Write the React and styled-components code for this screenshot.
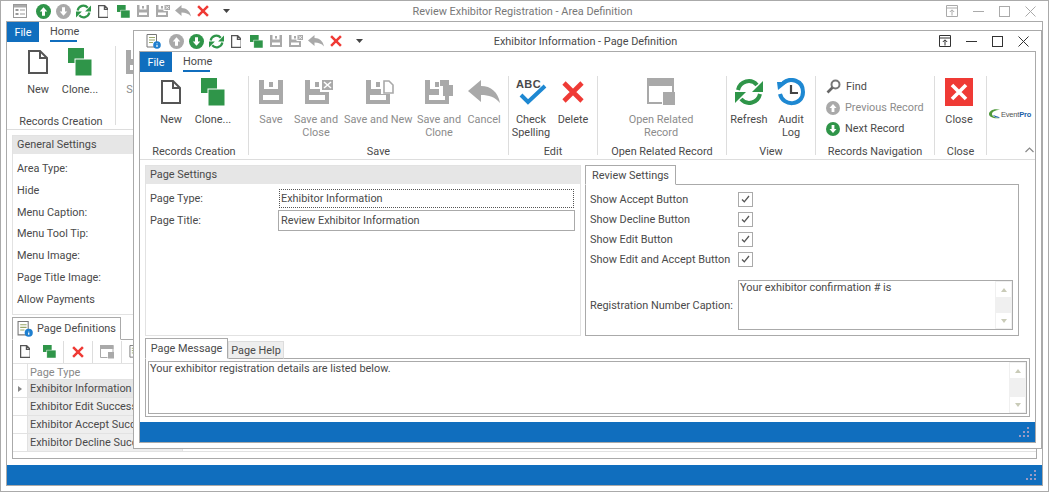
import React from "react";
import styled, { createGlobalStyle } from "styled-components";

const Global = createGlobalStyle`
    html, body { margin: 0; padding: 0; background: #fff; }
    body {
        font-family: Roboto, "Liberation Sans", sans-serif;
        font-size: 10.9px;
        color: #4a4a4a;
    }
`;

const BLUE = "#106ebe";
const GREEN = "#2f9549";
const RED = "#ef3a35";
const GREY = "#a9a9a9";
const DARK = "#555";

/* ---------- icons ---------- */
const DocIcon = ({ h = 24 }) => (
    <svg width={(h * 20) / 24} height={h} viewBox="0 0 20 24">
        <path d="M1 1H12L19 8V23H1Z M12 1V8H19" fill="#fff" stroke={DARK} strokeWidth={h > 18 ? 2 : 2.6} />
    </svg>
);
const CloneIcon = ({ w = 24, h = 28 }) => (
    <svg width={w} height={h} viewBox="0 0 24 28" preserveAspectRatio="none">
        <rect x="0" y="0" width="16" height="15" fill={GREEN} />
        <rect x="7" y="11" width="17" height="17" fill={GREEN} stroke="#fff" strokeWidth="1" />
    </svg>
);
const SaveIcon = ({ kind, h = 24 }) => (
    <svg width={((kind ? 28 : 24) * h) / 24} height={h} viewBox={kind ? "0 0 28 24" : "0 0 24 24"}>
        <path
            fillRule="evenodd"
            fill={GREY}
            d="M0 0H24V24H0Z M5 0V9H19V0Z M4 15V20H20V15Z"
        />
        <rect x="10" y="2" width="4" height="5" fill={GREY} />
        {kind === "close" && (
            <g>
                <rect x="15" y="0" width="13" height="12" fill="#fff" />
                <rect x="17" y="0" width="11" height="10" fill={GREY} />
                <path d="M19 2L26 8M26 2L19 8" stroke="#fff" strokeWidth="1.6" />
            </g>
        )}
        {kind === "new" && (
            <g>
                <rect x="15" y="0" width="13" height="14" fill="#fff" />
                <path d="M18 1H23L27 5V13H18Z" fill="#fff" stroke={GREY} strokeWidth="1.6" />
            </g>
        )}
        {kind === "clone" && (
            <g>
                <rect x="14" y="5" width="14" height="11" fill="#fff" />
                <rect x="15" y="0" width="7" height="6" fill={GREY} />
                <rect x="18" y="5" width="10" height="11" fill={GREY} />
            </g>
        )}
    </svg>
);
const CancelIcon = ({ w = 32 }) => (
    <svg width={w} height={(w * 24) / 32} viewBox="0 0 32 24">
        <path d="M0 11L13 0V6C23 6 30 12 32 23C27 17 21 15 13 15V22Z" fill={GREY} />
    </svg>
);
const CrossIcon = ({ s = 22 }) => (
    <svg width={s} height={s} viewBox="0 0 22 22">
        <path d="M2 2L20 20M20 2L2 20" stroke={RED} strokeWidth="4.6" fill="none" />
    </svg>
);
const SpellIcon = () => (
    <svg width="32" height="28" viewBox="0 0 32 28">
        <text x="1" y="10" fontFamily="Liberation Sans" fontWeight="700" fontSize="11" letterSpacing=".4" fill="#4a4a4a">
            ABC
        </text>
        <path d="M6 17L13 24L30 8" stroke="#1e88d2" strokeWidth="4" fill="none" />
    </svg>
);
const RelatedIcon = ({ s = 28 }) => (
    <svg width={s} height={s} viewBox="0 0 28 28">
        <path d="M1 1H26V20" fill="none" stroke={GREY} strokeWidth="2" />
        <rect x="0" y="0" width="27" height="8" fill={GREY} />
        <path d="M1 8V25H15" fill="none" stroke={GREY} strokeWidth="2" />
        <rect x="16" y="14" width="12" height="13" fill={GREY} />
    </svg>
);
const RefreshIcon = ({ s = 28 }) => (
    <svg width={s} height={s} viewBox="0 0 28 28">
        <path d="M3 12C5 3 16 0 22 7" fill="none" stroke={GREEN} strokeWidth="4" />
        <path d="M28 3V14H17Z" fill={GREEN} />
        <path d="M25 16C23 25 12 28 6 21" fill="none" stroke={GREEN} strokeWidth="4" />
        <path d="M0 25V14H11Z" fill={GREEN} />
    </svg>
);
const AuditIcon = () => (
    <svg width="28" height="28" viewBox="0 0 28 28">
        <path d="M6 5C13 -1 26 2 26 14C26 28 6 29 3 16" fill="none" stroke="#1e88d2" strokeWidth="4" />
        <path d="M0 4H11L1 12Z" fill="#1e88d2" />
        <path d="M14 7V15H21" fill="none" stroke="#444" strokeWidth="2.2" />
    </svg>
);
const FindIcon = () => (
    <svg width="15" height="15" viewBox="0 0 15 15">
        <circle cx="9.5" cy="5.5" r="4" fill="#fff" stroke="#777" strokeWidth="2" />
        <path d="M6.5 8.5L1.5 13.5" stroke="#666" strokeWidth="2.6" />
    </svg>
);
const ArrowDot = ({ up, color, s = 14 }) => (
    <svg width={s} height={s} viewBox="0 0 14 14">
        <circle cx="7" cy="7" r="7" fill={color} />
        <path
            d={up ? "M7 3L10.5 7H8.4V11H5.6V7H3.5Z" : "M7 11L10.5 7H8.4V3H5.6V7H3.5Z"}
            fill="#fff"
        />
    </svg>
);
const CloseBoxIcon = () => (
    <svg width="28" height="28" viewBox="0 0 28 28">
        <rect width="28" height="28" fill={RED} />
        <path d="M7 7L21 21M21 7L7 21" stroke="#fff" strokeWidth="3.6" />
    </svg>
);
const ListIcon = () => (
    <svg width="14" height="14" viewBox="0 0 14 14">
        <rect x=".5" y=".5" width="13" height="13" fill="#fff" stroke="#999" />
        <rect x="1" y="1" width="12" height="2.5" fill="#aaa" />
        <rect x="2.5" y="5" width="3" height="2" fill="#999" />
        <rect x="2.5" y="9" width="3" height="2" fill="#999" />
        <path d="M7 6H12M7 10H12" stroke="#999" />
    </svg>
);
const InfoDocIcon = ({ s = 15 }) => (
    <svg width={s} height={s} viewBox="0 0 15 15">
        <path d="M1 .5H10.5V13H1Z" fill="#fff" stroke="#777" />
        <path d="M3 3.5H9M3 6H9M3 8.5H7" stroke="#9aa86a" />
        <circle cx="11" cy="11" r="3.8" fill="#1e7fcf" />
        <path d="M11 9.6V9.9M11 10.8V13" stroke="#fff" strokeWidth="1.2" />
    </svg>
);
const CaretDown = () => (
    <svg width="7" height="4" viewBox="0 0 7 4">
        <path d="M0 0H7L3.5 4Z" fill="#444" />
    </svg>
);
const ChevronUp = () => (
    <svg width="9" height="6" viewBox="0 0 9 6">
        <path d="M.5 5L4.5 1L8.5 5" fill="none" stroke="#888" strokeWidth="1.2" />
    </svg>
);
const Restore = ({ c }) => (
    <svg width="12" height="12" viewBox="0 0 12 12">
        <path d="M.5 .5H11.5V11.5H.5ZM.5 3H11.5M6 10.5V5M3.8 7L6 4.8L8.2 7" fill="none" stroke={c} />
    </svg>
);
const Minimize = ({ c }) => (
    <svg width="11" height="11" viewBox="0 0 11 11">
        <path d="M0 5.5H11" stroke={c} />
    </svg>
);
const Maximize = ({ c }) => (
    <svg width="11" height="11" viewBox="0 0 11 11">
        <rect x=".5" y=".5" width="10" height="10" fill="none" stroke={c} />
    </svg>
);
const CloseX = ({ c }) => (
    <svg width="11" height="11" viewBox="0 0 11 11">
        <path d="M.5 .5L10.5 10.5M10.5 .5L.5 10.5" fill="none" stroke={c} />
    </svg>
);
const Grip = () => (
    <svg width="11" height="11" viewBox="0 0 11 11">
        {[[8, 0], [4, 4], [8, 4], [0, 8], [4, 8], [8, 8]].map(([x, y]) => (
            <rect key={x + "-" + y} x={x} y={y} width="2" height="2" fill="#9b9bc4" />
        ))}
    </svg>
);

/* ---------- window chrome ---------- */
const Win = styled.div`
    box-sizing: border-box;
    background: #fff;
    border: 1px solid #aaa;
    display: flex;
    flex-direction: column;
    padding: 0 5px 5px;
`;
const OuterWin = styled(Win)`
    position: relative;
    width: 1049px;
    height: 492px;
    overflow: hidden;
`;
const ChildWin = styled(Win)`
    position: absolute;
    left: 132px;
    top: 29px;
    width: 909px;
    height: 419px;
`;
const TitleBar = styled.div`
    height: 20px;
    flex: none;
    display: grid;
    grid-template-columns: 1fr auto 1fr;
    align-items: center;
    margin: 0 -5px;
`;
const Qat = styled.div`
    display: flex;
    align-items: center;
    padding-left: 9px;
`;
const QatCell = styled.span`
    width: 20px;
    height: 20px;
    display: flex;
    align-items: center;
    justify-content: center;
    margin-right: ${(p) => p.$mr || 0}px;
`;
const Title = styled.div`
    color: ${(p) => (p.$dim ? "#777" : "#4a4a4a")};
    white-space: nowrap;
    margin-right: 4px;
`;
const Controls = styled.div`
    justify-self: end;
    display: flex;
    align-items: center;
    padding-right: 5px;
`;
const Ctl = styled.span`
    width: 26px;
    display: flex;
    justify-content: center;
`;
const Frame = styled.div`
    flex: 1;
    min-height: 0;
    border: 1px solid #aaa;
    display: flex;
    flex-direction: column;
`;
const StatusBar = styled.div`
    height: 20px;
    flex: none;
    background: ${BLUE};
    display: flex;
    justify-content: flex-end;
    align-items: flex-end;
    padding: 0 5px 4px 0;
    box-sizing: border-box;
`;

/* ---------- ribbon ---------- */
const Ribbon = styled.div`
    flex: none;
    height: 108px;
    box-sizing: border-box;
    border-bottom: 1px solid #ddd;
`;
const RibbonTabs = styled.div`
    height: 20px;
    display: flex;
    align-items: stretch;
`;
const FileTab = styled.div`
    width: 32px;
    background: ${BLUE};
    color: #fff;
    display: flex;
    align-items: center;
    justify-content: center;
`;
const HomeTab = styled.div`
    margin-left: 11px;
    width: 27px;
    box-sizing: border-box;
    border-bottom: 2px solid ${BLUE};
    line-height: 19px;
    text-align: center;
    white-space: nowrap;
`;
const Groups = styled.div`
    display: flex;
    height: 79px;
    margin-top: 4px;
`;
const Group = styled.div`
    flex: none;
    width: ${(p) => p.$w}px;
    box-sizing: border-box;
    border-right: ${(p) => (p.$last ? "none" : "1px solid #ddd")};
    display: flex;
    flex-direction: column;
    position: relative;
`;
const GroupBody = styled.div`
    flex: 1;
    min-height: 0;
    display: flex;
    padding: 2px 0 0 ${(p) => p.$pad || 0}px;
`;
const GroupLabel = styled.div`
    height: 14px;
    line-height: 14px;
    margin-bottom: -4px;
    text-align: center;
    white-space: nowrap;
`;
const BigButton = styled.div`
    flex: none;
    width: ${(p) => p.$w}px;
    text-align: center;
    line-height: 13px;
    white-space: nowrap;
    color: ${(p) => (p.$off ? "#8c8c8c" : "#4a4a4a")};
`;
const BigIcon = styled.div`
    height: 28px;
    margin-bottom: 7px;
    padding-left: ${(p) => p.$shift || 0}px;
    display: flex;
    align-items: center;
    justify-content: center;
`;
const SmallStack = styled.div`
    display: flex;
    flex-direction: column;
    margin-top: -2px;
    padding-left: 10px;
`;
const SmallButton = styled.div`
    height: 21px;
    display: flex;
    align-items: center;
    gap: 5px;
    white-space: nowrap;
    color: ${(p) => (p.$off ? "#8c8c8c" : "#4a4a4a")};
`;
const Logo = styled.div`
    margin: 33px 0 0 2px;
    display: flex;
    align-items: center;
    font-family: "Liberation Sans", sans-serif;
    font-size: 7.5px;
    letter-spacing: -0.2px;
    color: #555;
    b { color: #1d5fa8; }
`;
const Collapse = styled.span`
    position: absolute;
    right: 2px;
    bottom: 2px;
    display: flex;
`;

/* ---------- panels ---------- */
const Panel = styled.div`
    border: 1px solid #e2e2e2;
    box-sizing: border-box;
`;
const PanelHead = styled.div`
    height: 18px;
    line-height: 17px;
    background: #e6e6e6;
    padding-left: 4px;
`;
const Field = styled.div`
    flex: none;
    width: 297px;
    height: 21px;
    line-height: 19px;
    box-sizing: border-box;
    border: 1px solid ${(p) => (p.$focus ? "#fff" : "#aaa")};
    padding: 0 2px;
    outline: ${(p) => (p.$focus ? "1px dotted #555" : "none")};
    outline-offset: -2px;
`;
const FormBody = styled.div`
    padding-top: 3px;
`;
const FormRow = styled.div`
    display: flex;
    align-items: center;
    height: 22px;
    padding-left: 4px;
`;
const FormLabel = styled.div`
    width: 128px;
    flex: none;
`;
const Content = styled.div`
    flex: 1;
    min-height: 0;
    padding: 5px 5px 0;
    display: flex;
    flex-direction: column;
`;
const TopRow = styled.div`
    flex: none;
    display: flex;
    gap: 4px;
    height: 171px;
`;
const SettingsPanel = styled(Panel)`
    width: 436px;
`;
const SettingsBody = styled.div`
    padding-top: 4px;
`;
const TabbedColumn = styled.div`
    display: flex;
    flex-direction: column;
    width: ${(p) => p.$w}px;
`;
const TabStrip = styled.div`
    flex: none;
    display: flex;
    align-items: flex-end;
    height: ${(p) => p.$h}px;
    margin-bottom: -1px;
    position: relative;
`;
const Tab = styled.div`
    box-sizing: border-box;
    width: ${(p) => p.$w}px;
    height: ${(p) => (p.$active ? "100%" : "calc(100% - 3px)")};
    border: 1px solid ${(p) => (p.$active ? "#aaa" : "#ddd")};
    border-bottom: ${(p) => (p.$active ? "1px solid #fff" : "1px solid #aaa")};
    background: ${(p) => (p.$active ? "#fff" : "#eee")};
    display: flex;
    align-items: center;
    justify-content: center;
    gap: 4px;
    white-space: nowrap;
`;
const TabBox = styled.div`
    flex: 1;
    min-height: 0;
    border: 1px solid #aaa;
    box-sizing: border-box;
`;
const CheckRow = styled.div`
    height: 20px;
    display: flex;
    align-items: center;
    padding-left: 4px;
`;
const CheckLabel = styled.div`
    width: 148px;
    flex: none;
    white-space: nowrap;
`;
const CheckBox = styled.span`
    width: 13px;
    height: 13px;
    border: 1px solid #aaa;
    display: flex;
    align-items: center;
    justify-content: center;
`;
const Memo = styled.div`
    border: 1px solid #aaa;
    display: flex;
    box-sizing: border-box;
    height: ${(p) => (p.$fill ? "100%" : `${p.$h}px`)};
    width: ${(p) => (p.$fill ? "auto" : `${p.$w}px`)};
`;
const MemoText = styled.div`
    flex: 1;
    padding: 0 1px;
    line-height: 14px;
`;
const ScrollBar = styled.div`
    width: 17px;
    flex: none;
    background: #f0f0f0;
    display: flex;
    flex-direction: column;
    justify-content: space-between;
    align-items: center;
    padding: 1px 0;
`;
const ScrollBtn = styled.span`
    width: 15px;
    height: 15px;
    background: #fff;
    display: flex;
    align-items: center;
    justify-content: center;
    &::after {
        content: "";
        border-left: 3.5px solid transparent;
        border-right: 3.5px solid transparent;
        ${(p) => (p.$up ? "border-bottom" : "border-top")}: 4px solid #c9cbb8;
    }
`;
const CaptionRow = styled.div`
    display: flex;
    align-items: center;
    padding: 11px 0 0 4px;
`;
const MessageWrap = styled.div`
    flex: none;
    height: 79px;
    margin-top: 2px;
    display: flex;
    flex-direction: column;
    width: 885px;
`;
const MessageBox = styled(TabBox)`
    padding: 2px;
`;

/* ---------- outer window body ---------- */
const OuterBody = styled.div`
    flex: 1;
    min-height: 0;
    padding: 5px 5px 6px;
    display: flex;
    flex-direction: column;
`;
const GeneralPanel = styled(Panel)`
    flex: none;
    height: 180px;
    margin-bottom: 2px;
`;
const GeneralRows = styled.div`
    padding: 4px 0 0 4px;
`;
const GeneralRow = styled.div`
    height: 21.8px;
    line-height: 21.8px;
`;
const DefsWrap = styled.div`
    flex: 1;
    min-height: 0;
    display: flex;
    flex-direction: column;
`;
const Toolbar = styled.div`
    height: 24px;
    box-sizing: border-box;
    display: flex;
    align-items: center;
    gap: 4px;
    padding-left: 2px;
    border-bottom: 1px solid #e2e2e2;
`;
const ToolCell = styled.span`
    width: 20px;
    display: flex;
    align-items: center;
    justify-content: center;
`;
const ToolSep = styled.span`
    width: 1px;
    height: 22px;
    background: #ddd;
`;
const GridRow = styled.div`
    display: flex;
    height: 18px;
    border-bottom: 1px solid #e2e2e2;
    box-sizing: border-box;
`;
const GridHead = styled(GridRow)`
    height: 16px;
    color: #888;
`;
const Indicator = styled.div`
    width: 14px;
    flex: none;
    border-right: 1px solid #e2e2e2;
    display: flex;
    align-items: center;
    justify-content: center;
    &::after {
        content: "";
        display: ${(p) => (p.$on ? "block" : "none")};
        border-top: 3.5px solid transparent;
        border-bottom: 3.5px solid transparent;
        border-left: 4px solid #888;
    }
`;
const GridCell = styled.div`
    width: 155px;
    flex: none;
    box-sizing: border-box;
    padding-left: 2px;
    line-height: 17px;
    white-space: nowrap;
    overflow: hidden;
    border-right: 1px solid #e2e2e2;
    background: ${(p) => p.$bg || "transparent"};
`;

const Check = () => (
    <CheckBox>
        <svg width="9" height="8" viewBox="0 0 9 8">
            <path d="M1 4.5L3.3 6.8L8 1" fill="none" stroke="#555" strokeWidth="1.3" />
        </svg>
    </CheckBox>
);

const Scroll = () => (
    <ScrollBar>
        <ScrollBtn $up />
        <ScrollBtn />
    </ScrollBar>
);

const RibbonHead = () => (
    <RibbonTabs>
        <FileTab>File</FileTab>
        <HomeTab>Home</HomeTab>
    </RibbonTabs>
);

const CreationGroup = () => (
    <Group $w={109}>
        <GroupBody $pad={13}>
            <BigButton $w={36}>
                <BigIcon><DocIcon /></BigIcon>
                New
            </BigButton>
            <BigButton $w={48}>
                <BigIcon><CloneIcon /></BigIcon>
                Clone...
            </BigButton>
        </GroupBody>
        <GroupLabel>Records Creation</GroupLabel>
    </Group>
);

const QuickIcons = ({ up, down, first }) => (
    <Qat>
        <QatCell $mr={3}>
            {first === "list" ? <ListIcon /> : <InfoDocIcon />}
        </QatCell>
        <QatCell><ArrowDot up color={up} s={15} /></QatCell>
        <QatCell><ArrowDot color={down} s={15} /></QatCell>
        <QatCell><RefreshIcon s={15} /></QatCell>
        <QatCell><DocIcon h={13} /></QatCell>
        <QatCell><CloneIcon w={13} h={13} /></QatCell>
        <QatCell><SaveIcon h={12} /></QatCell>
        <QatCell><SaveIcon h={12} kind="close" /></QatCell>
        <QatCell><CancelIcon w={16} /></QatCell>
        <QatCell $mr={3}><CrossIcon s={12} /></QatCell>
        <QatCell><CaretDown /></QatCell>
    </Qat>
);

const WinControls = ({ c }) => (
    <Controls>
        <Ctl><Restore c={c} /></Ctl>
        <Ctl><Minimize c={c} /></Ctl>
        <Ctl><Maximize c={c} /></Ctl>
        <Ctl><CloseX c={c} /></Ctl>
    </Controls>
);

const ChildWindow = () => (
    <ChildWin>
        <TitleBar>
            <QuickIcons up={GREY} down={GREEN} first="info" />
            <Title>Exhibitor Information - Page Definition</Title>
            <WinControls c="#333" />
        </TitleBar>
        <Frame>
            <Ribbon>
                <RibbonHead />
                <Groups>
                    <CreationGroup />
                    <Group $w={260}>
                        <GroupBody $pad={5}>
                            <BigButton $off $w={34}><BigIcon><SaveIcon /></BigIcon>Save</BigButton>
                            <BigButton $off $w={56}><BigIcon $shift={6}><SaveIcon kind="close" /></BigIcon>Save and<br />Close</BigButton>
                            <BigButton $off $w={68}><BigIcon $shift={4}><SaveIcon kind="new" /></BigIcon>Save and New</BigButton>
                            <BigButton $off $w={54}><BigIcon><SaveIcon kind="clone" /></BigIcon>Save and<br />Clone</BigButton>
                            <BigButton $off $w={36}><BigIcon><CancelIcon /></BigIcon>Cancel</BigButton>
                        </GroupBody>
                        <GroupLabel>Save</GroupLabel>
                    </Group>
                    <Group $w={89}>
                        <GroupBody $pad={2}>
                            <BigButton $w={40}><BigIcon><SpellIcon /></BigIcon>Check<br />Spelling</BigButton>
                            <BigButton $w={44}><BigIcon><CrossIcon /></BigIcon>Delete</BigButton>
                        </GroupBody>
                        <GroupLabel>Edit</GroupLabel>
                    </Group>
                    <Group $w={129}>
                        <GroupBody $pad={13}>
                            <BigButton $off $w={100}><BigIcon><RelatedIcon /></BigIcon>Open Related<br />Record</BigButton>
                        </GroupBody>
                        <GroupLabel>Open Related Record</GroupLabel>
                    </Group>
                    <Group $w={89}>
                        <GroupBody $pad={1}>
                            <BigButton $w={42}><BigIcon><RefreshIcon /></BigIcon>Refresh</BigButton>
                            <BigButton $w={42}><BigIcon><AuditIcon /></BigIcon>Audit<br />Log</BigButton>
                        </GroupBody>
                        <GroupLabel>View</GroupLabel>
                    </Group>
                    <Group $w={119}>
                        <GroupBody>
                            <SmallStack>
                                <SmallButton><FindIcon />Find</SmallButton>
                                <SmallButton $off><ArrowDot up color={GREY} />Previous Record</SmallButton>
                                <SmallButton><ArrowDot color={GREEN} />Next Record</SmallButton>
                            </SmallStack>
                        </GroupBody>
                        <GroupLabel>Records Navigation</GroupLabel>
                    </Group>
                    <Group $w={52}>
                        <GroupBody $pad={3}>
                            <BigButton $w={42}><BigIcon><CloseBoxIcon /></BigIcon>Close</BigButton>
                        </GroupBody>
                        <GroupLabel>Close</GroupLabel>
                    </Group>
                    <Group $w={49} $last>
                        <Logo>
                            <svg width="12" height="10" viewBox="0 0 12 10">
                                <path d="M11 1C5 -1 0 2 0 5C0 8 5 10 11 9C6 9 3 7 3 5C3 3 6 1 11 1Z" fill="#4f9a3c" />
                                <path d="M11 9C8 9 5 8 4 6C6 7 9 7 11 9Z" fill="#1d5fa8" />
                            </svg>
                            <span>Event<b>Pro</b></span>
                        </Logo>
                        <Collapse><ChevronUp /></Collapse>
                    </Group>
                </Groups>
            </Ribbon>
            <Content>
                <TopRow>
                    <SettingsPanel>
                        <PanelHead>Page Settings</PanelHead>
                        <FormBody>
                            <FormRow><FormLabel>Page Type:</FormLabel><Field $focus>Exhibitor Information</Field></FormRow>
                            <FormRow><FormLabel>Page Title:</FormLabel><Field>Review Exhibitor Information</Field></FormRow>
                        </FormBody>
                    </SettingsPanel>
                    <TabbedColumn $w={434}>
                        <TabStrip $h={20}>
                            <Tab $active $w={91}>Review Settings</Tab>
                        </TabStrip>
                        <TabBox>
                            <SettingsBody>
                                <CheckRow><CheckLabel>Show Accept Button</CheckLabel><Check /></CheckRow>
                                <CheckRow><CheckLabel>Show Decline Button</CheckLabel><Check /></CheckRow>
                                <CheckRow><CheckLabel>Show Edit Button</CheckLabel><Check /></CheckRow>
                                <CheckRow><CheckLabel>Show Edit and Accept Button</CheckLabel><Check /></CheckRow>
                                <CaptionRow>
                                    <CheckLabel>Registration Number Caption:</CheckLabel>
                                    <Memo $w={275} $h={50}>
                                        <MemoText>Your exhibitor confirmation # is</MemoText>
                                        <Scroll />
                                    </Memo>
                                </CaptionRow>
                            </SettingsBody>
                        </TabBox>
                    </TabbedColumn>
                </TopRow>
                <MessageWrap>
                    <TabStrip $h={21}>
                        <Tab $active $w={83}>Page Message</Tab>
                        <Tab $w={56}>Page Help</Tab>
                    </TabStrip>
                    <MessageBox>
                        <Memo $fill>
                            <MemoText>Your exhibitor registration details are listed below.</MemoText>
                            <Scroll />
                        </Memo>
                    </MessageBox>
                </MessageWrap>
            </Content>
            <StatusBar><Grip /></StatusBar>
        </Frame>
    </ChildWin>
);

const App = () => (
    <>
        <Global />
        <OuterWin>
            <TitleBar>
                <QuickIcons up={GREEN} down={GREY} first="list" />
                <Title $dim>Review Exhibitor Registration - Area Definition</Title>
                <WinControls c="#aaa" />
            </TitleBar>
            <Frame>
                <Ribbon>
                    <RibbonHead />
                    <Groups>
                        <CreationGroup />
                        <Group $w={200}>
                            <GroupBody $pad={5}>
                                <BigButton $off $w={34}><BigIcon><SaveIcon /></BigIcon>Save</BigButton>
                            </GroupBody>
                        </Group>
                    </Groups>
                </Ribbon>
                <OuterBody>
                    <GeneralPanel>
                        <PanelHead>General Settings</PanelHead>
                        <GeneralRows>
                            <GeneralRow>Area Type:</GeneralRow>
                            <GeneralRow>Hide</GeneralRow>
                            <GeneralRow>Menu Caption:</GeneralRow>
                            <GeneralRow>Menu Tool Tip:</GeneralRow>
                            <GeneralRow>Menu Image:</GeneralRow>
                            <GeneralRow>Page Title Image:</GeneralRow>
                            <GeneralRow>Allow Payments</GeneralRow>
                        </GeneralRows>
                    </GeneralPanel>
                    <DefsWrap>
                        <TabStrip $h={23}>
                            <Tab $active $w={109}><InfoDocIcon s={16} />Page Definitions</Tab>
                        </TabStrip>
                        <TabBox>
                            <Toolbar>
                                <ToolCell><DocIcon h={13} /></ToolCell>
                                <ToolCell><CloneIcon w={13} h={13} /></ToolCell>
                                <ToolSep />
                                <ToolCell><CrossIcon s={12} /></ToolCell>
                                <ToolSep />
                                <ToolCell><RelatedIcon s={14} /></ToolCell>
                                <ToolSep />
                                <ToolCell><InfoDocIcon s={14} /></ToolCell>
                            </Toolbar>
                            <GridHead><Indicator /><GridCell>Page Type</GridCell></GridHead>
                            <GridRow><Indicator $on /><GridCell $bg="#e6e6e6">Exhibitor Information</GridCell></GridRow>
                            <GridRow><Indicator /><GridCell $bg="#eee">Exhibitor Edit Success</GridCell></GridRow>
                            <GridRow><Indicator /><GridCell $bg="#eee">Exhibitor Accept Success</GridCell></GridRow>
                            <GridRow><Indicator /><GridCell $bg="#eee">Exhibitor Decline Success</GridCell></GridRow>
                        </TabBox>
                    </DefsWrap>
                </OuterBody>
                <StatusBar><Grip /></StatusBar>
            </Frame>
            <ChildWindow />
        </OuterWin>
    </>
);

export default App;
